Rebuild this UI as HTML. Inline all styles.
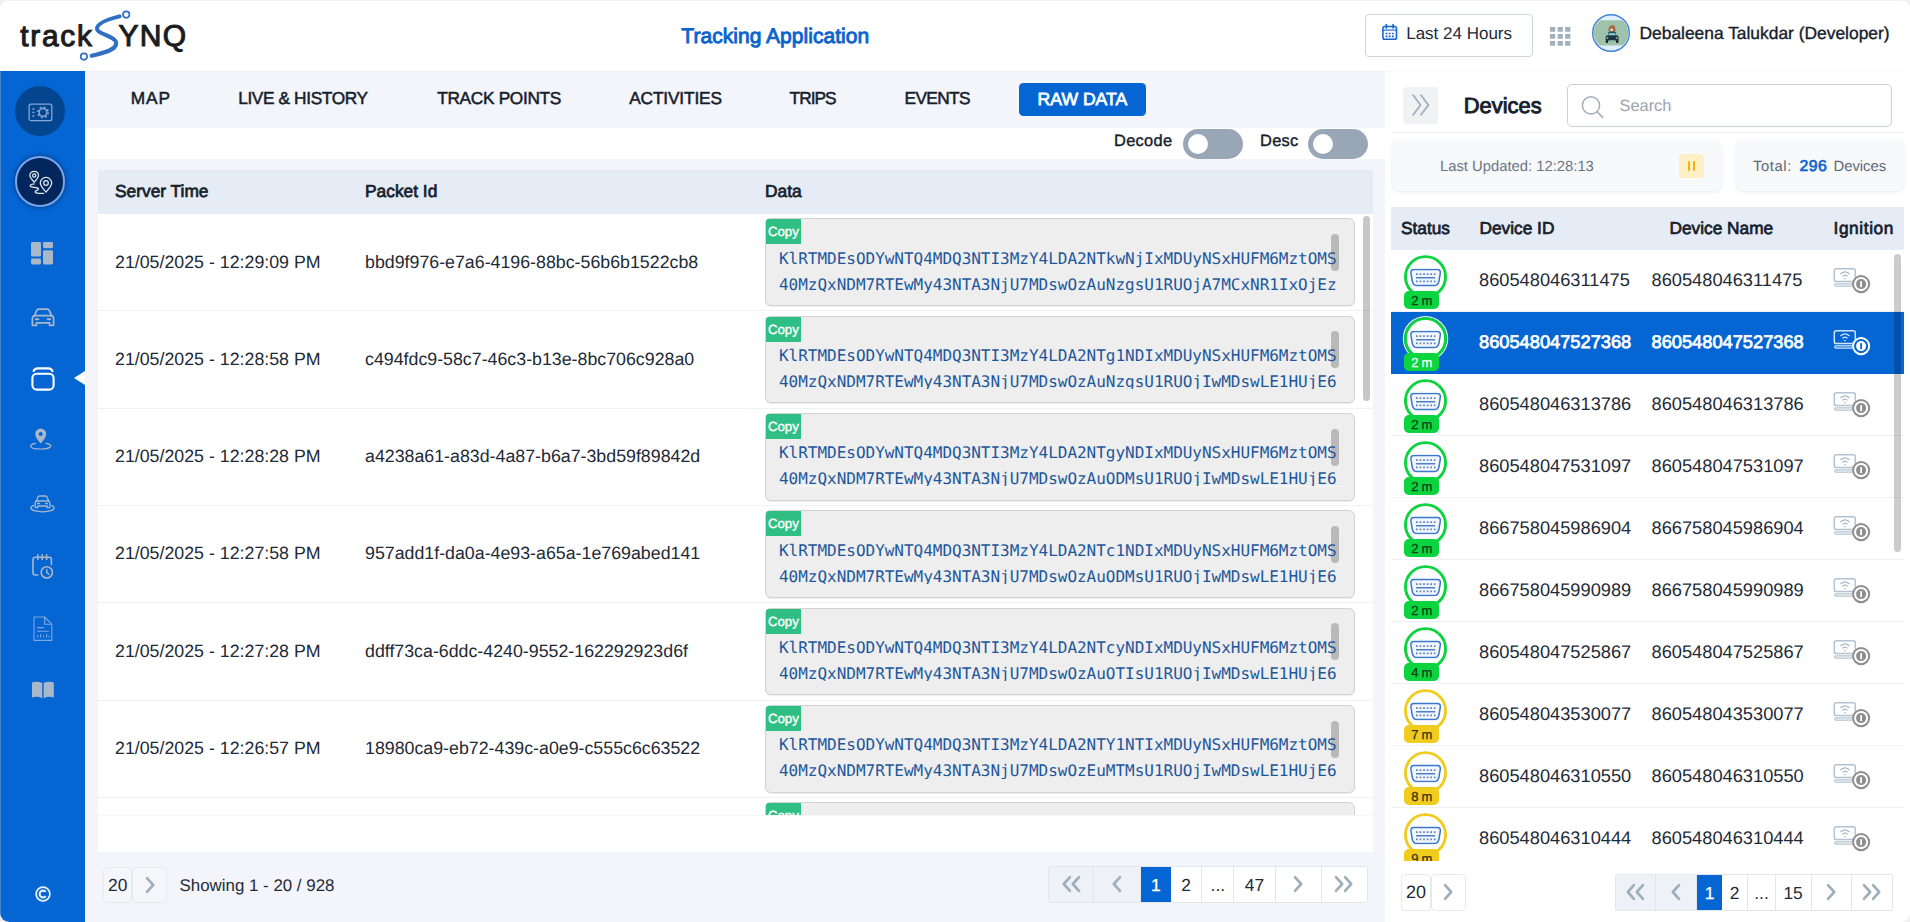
<!DOCTYPE html>
<html lang="en"><head><meta charset="utf-8"><title>Tracking Application</title>
<style>
*{box-sizing:border-box}
html,body{margin:0;padding:0}
body{width:1910px;height:922px;overflow:hidden;background:#f1f1f1;text-rendering:geometricPrecision;font-family:"Liberation Sans",sans-serif;color:#1e2a36;position:relative}
svg{display:block;overflow:visible}
#app{position:absolute;left:0;top:0;width:1910px;height:922px;background:#f3f5fa;border-radius:9.5px;overflow:hidden}
#app:after{content:"";position:absolute;left:0;top:0;width:100%;height:1px;background:#f1f1f1;z-index:50}
/* header */
#hdr{position:absolute;left:0;top:0;width:1910px;height:70.5px;background:#fff;box-shadow:0 1px 2px rgba(20,40,80,.03);z-index:5}
#logo{position:absolute;left:0;top:0}
#ttl{position:absolute;left:681.3px;top:24.8px;letter-spacing:.04px;font-size:21px;line-height:24px;font-weight:normal;-webkit-text-stroke:.9px #0b63ce;color:#0b63ce;white-space:nowrap}
#l24{position:absolute;left:1365px;top:14px;width:168px;height:42.5px;border:1px solid #cfd5de;border-radius:4px;background:#fff}
#l24 svg{position:absolute;left:16px;top:9.3px}
#l24 span{position:absolute;left:40.2px;top:8.3px;font-size:17px;line-height:22px;color:#1e2a36;white-space:nowrap}
#grid{position:absolute;left:1550.2px;top:26.5px}
#ava{position:absolute;left:1590.6px;top:13.4px}
#usr{position:absolute;left:1639.5px;top:20.5px;font-size:17.4px;line-height:24px;white-space:nowrap;color:#16202b;-webkit-text-stroke:.35px #16202b}
/* sidebar */
#side{position:absolute;left:0;top:71px;width:85px;height:851px;background:#0565d3;box-shadow:inset 1px 0 0 rgba(150,170,200,.45)}
#side svg{position:absolute}
#side .c1{position:absolute;left:15px;top:15px;width:50px;height:50px;border-radius:50%;background:#04458f}
#side .c2{position:absolute;left:14.6px;top:84.8px;width:50.8px;height:50.8px;border-radius:50%;background:#03275c;border:2px solid #7aa6ea;box-shadow:0 0 5px rgba(0,20,60,.6)}
#side .ptr{position:absolute;left:73.5px;top:299.8px;width:0;height:0;border-top:7.2px solid transparent;border-bottom:7.2px solid transparent;border-right:11.5px solid #fff}
#side .cr{position:absolute;left:32px;top:811px;font-size:20px;line-height:22px;color:#fff}
/* tabs */
#tabs{position:absolute;left:85px;top:71px;width:1300px;height:57px;background:#f3f5fa}
.tab{position:absolute;top:16.2px;font-size:17.3px;line-height:22px;white-space:nowrap;color:#16202b;-webkit-text-stroke:.5px #16202b}
.tab.on{left:934px;top:11.6px;width:126.8px;height:33.6px;border-radius:4.5px;background:#0565d3;color:#fff;font-weight:normal;-webkit-text-stroke:.75px #fff;text-align:center;line-height:33px;font-size:17.6px;letter-spacing:0}
/* toggle strip */
#strip{position:absolute;left:85px;top:128px;width:1300px;height:31px;background:#fff}
.tl{position:absolute;top:2.4px;letter-spacing:.3px;font-size:16.4px;line-height:22px;white-space:nowrap;color:#16202b;-webkit-text-stroke:.4px #16202b}
.tg{position:absolute;top:1px;width:60px;height:29.5px;border-radius:15px;background:#98a6b5}
.tg i{position:absolute;left:4.5px;top:4.5px;width:20.5px;height:20.5px;border-radius:50%;background:#fff}
/* card */
#card{position:absolute;left:98px;top:170px;width:1275px;height:681.5px;background:#fff;overflow:hidden}
.thead{position:absolute;left:0;top:0;width:1275px;height:44px;background:#e6ecf5}
.thead span{position:absolute;top:10.2px;font-size:17.35px;line-height:22px;font-weight:normal;-webkit-text-stroke:.7px #16202b;color:#16202b;white-space:nowrap}
.tbody{position:absolute;left:0;top:44px;width:1275px;height:601px;overflow:hidden}
.tr{position:relative;height:97.33px;border-bottom:1.5px solid #eef1f6}
.tr span{position:absolute;top:36.5px;font-size:17.8px;line-height:22px;color:#1e2a36;white-space:nowrap}
.tr .c1{left:17px}
.tr .c2{left:267px;font-size:17.8px;letter-spacing:0}
.pre{position:absolute;left:667px;top:4.3px;width:590px;height:87.6px;background:#eeeeee;border:1px solid #d2d2d2;border-radius:6px;box-shadow:0 1px 1px rgba(0,0,0,.07)}
.pre pre{position:absolute;z-index:2;left:13px;top:26.3px;width:566px;overflow:hidden;margin:0;font-family:"DejaVu Sans Mono","Liberation Mono",monospace;font-size:16px;line-height:26px;color:#1d579b;letter-spacing:-.02px}
.cp{position:absolute;left:0;top:0;width:34.8px;height:25px;background:#2fbf85;color:#fff;font-size:13.3px;line-height:26.2px;text-align:center;font-weight:normal;-webkit-text-stroke:.35px #fff;border-radius:2.5px 0 0 0}
.pre u{position:absolute;z-index:1;right:15.2px;top:14.6px;width:7.6px;height:37px;border-radius:3.8px;background:rgba(0,0,0,.22)}
.vsb{position:absolute;left:1265.2px;top:46.3px;width:6.9px;height:184.6px;border-radius:3.5px;background:rgba(0,0,0,.22)}
/* footer */
#foot{position:absolute;left:85px;top:851.5px;width:1300px;height:71px;background:#f3f5fa}
.pb{position:absolute;top:15px;height:36.5px;border:1px solid #e6e9ee;border-radius:4px;background:#f5f6fa;font-size:17.4px;line-height:34.4px;text-align:center;color:#1e2a36}
.show{position:absolute;left:94.5px;top:23.1px;font-size:16.9px;line-height:22px;white-space:nowrap;color:#1e2a36}
.pager{position:absolute;display:flex;border:1px solid #e3e6ec;border-radius:2px;background:#fff}
.pc{position:relative;height:100%;border-right:1px solid #e3e6ec;background:#fff;font-size:17.4px;line-height:37px;text-align:center;color:#1e2a36}
.pc:last-child{border-right:0}
.pc.dis{background:#eef1f6}
.pc.act{background:#0565d3;color:#fff;border-right:0;-webkit-text-stroke:.3px #fff}
svg.ch{position:absolute;left:50%;top:50%;width:10px;height:18px;margin:-9px 0 0 -5px}
svg.ch2{position:absolute;left:50%;top:50%;width:20px;height:18px;margin:-9px 0 0 -10px}
/* right */
#rp{position:absolute;left:1385px;top:71px;width:525px;height:851px;background:#fff}
#rp .col{position:absolute;left:18px;top:15.5px;width:35px;height:37.5px;border-radius:4px;background:#f1f2f4}
#rp .col svg{position:absolute;left:9.4px;top:7.6px}
#rp .dv{position:absolute;left:78.8px;top:19.5px;font-size:21.9px;line-height:30px;font-weight:normal;-webkit-text-stroke:.9px #16202b;color:#16202b;white-space:nowrap}
#rp .sb{position:absolute;left:182px;top:13.3px;width:325px;height:42.4px;border:1px solid #c7d0db;border-radius:5px;background:#fff}
#rp .sb svg{position:absolute;left:12.6px;top:9.6px}
#rp .sb span{position:absolute;left:51.5px;top:9.4px;font-size:16.4px;line-height:22px;color:#9aa3ae}
#rp .hr{position:absolute;left:6px;top:60.5px;width:513px;height:1.5px;background:#eef0f4}
#rp .k1,#rp .k2{position:absolute;top:69px;height:50.6px;border-radius:7px;background:#f8f9fb;box-shadow:0 1px 3px rgba(30,50,90,.10)}
#rp .k1{left:6.5px;width:330.5px}
#rp .k2{left:350.5px;width:168.5px}
#rp .k1 span{position:absolute;left:48.5px;top:16.7px;font-size:14.8px;line-height:20px;color:#6c7683;white-space:nowrap}
#rp .k1 b{position:absolute;left:287.5px;top:13.6px;width:25px;height:24.5px;border-radius:4px;background:#fdefc6}
#rp .k1 b:before,#rp .k1 b:after{content:"";position:absolute;top:7.5px;width:2.4px;height:9.5px;background:#f1b400;border-radius:1px}
#rp .k1 b:before{left:8.6px}#rp .k1 b:after{left:14px}
#rp .k2 span{position:absolute;top:16.7px;font-size:14.8px;line-height:20px;color:#5d6775;white-space:nowrap}
#rp .k2 em{position:absolute;left:63.9px;top:16.7px;font-style:normal;font-weight:normal;-webkit-text-stroke:.65px #0b63ce;font-size:15.8px;letter-spacing:.55px;line-height:20px;color:#0b63ce}
#rp .rh{position:absolute;left:6px;top:135.5px;width:513px;height:43.5px;background:#e6ecf5}
#rp .rh span{position:absolute;top:10.2px;font-size:17.3px;line-height:22px;font-weight:normal;-webkit-text-stroke:.7px #16202b;color:#16202b;white-space:nowrap}
#dl{position:absolute;left:1391px;top:250px;width:513px;height:610.5px;overflow:hidden;background:#fff}
.dr{position:relative;height:62px;border-bottom:1.5px solid #eef0f4;background:#fff}
.dr.sel{background:#0565d3;border-bottom-color:#0565d3}
.dr span{position:absolute;white-space:nowrap}
.dr svg.st{position:absolute;left:12px;top:4px;width:46px;height:46px}
.st .ring{fill:#fff;stroke:#0bd43f;stroke-width:2.9}
.st .halo{fill:none;stroke:none}
.dr.sel .st .halo{stroke:#e4f6e9;stroke-width:1.3}
.st.y .ring{stroke:#f0cc1f}
.dr .bd{left:12.9px;top:41.3px;width:35.2px;height:18.2px;border-radius:4.8px;background:#0bd43f;color:#063d12;font-size:13px;line-height:19.4px;text-align:center;word-spacing:-.6px;-webkit-text-stroke:.25px #063d12;text-indent:.8px}
.dr .bd.y{background:#f0cc1f;color:#3a3000;-webkit-text-stroke-color:#3a3000}
.dr.sel .bd{color:#fff;-webkit-text-stroke-color:#fff}
.dr .d1,.dr .d2{top:18.1px;font-size:18.25px;line-height:24px;color:#1e2a36}
.dr .d1{left:88px}.dr .d2{left:260.5px}
.dr.sel .d1,.dr.sel .d2{color:#fff;-webkit-text-stroke:.75px #fff}
.dr svg.ign{position:absolute;left:442px;top:16.5px;width:38px;height:27px}
.dr.sel svg.ign{--c1:#d2e5ff;--c2:#fff;--c3:#0565d3}
.dsb{position:absolute;left:503px;top:4px;width:7px;height:298px;border-radius:3.5px;background:rgba(0,0,0,.2)}
#rfoot{position:absolute;left:1385px;top:873.5px;width:525px;height:38px}
#rfoot .pb{top:0;height:37.5px;background:#fff;border-color:#e6e9ee;line-height:35px;font-size:18px}

.endl{position:absolute;left:0;top:645px;width:1275px;height:1px;background:#f6f7f9}
.tr:not(.r1) .pre pre{height:46.4px;overflow:hidden}
.wl{position:absolute;left:12px;top:72.2px;width:568px;height:1px;background:#f8f8f8;z-index:3}

</style></head>
<body>
<svg width="0" height="0" style="position:absolute">
<defs>
<symbol id="chr" viewBox="0 0 10 18"><path d="M2 2.2 8.2 9 2 15.8" fill="none" stroke="#9dafbb" stroke-width="2.6" stroke-linecap="round" stroke-linejoin="round"/></symbol>
<symbol id="chl" viewBox="0 0 10 18"><path d="M8 2.2 1.8 9 8 15.8" fill="none" stroke="#9dafbb" stroke-width="2.6" stroke-linecap="round" stroke-linejoin="round"/></symbol>
<symbol id="chrr" viewBox="0 0 20 18"><path d="M2 2.2 8.2 9 2 15.8M11 2.2 17.2 9 11 15.8" fill="none" stroke="#9dafbb" stroke-width="2.6" stroke-linecap="round" stroke-linejoin="round"/></symbol>
<symbol id="chll" viewBox="0 0 20 18"><path d="M9 2.2 2.8 9 9 15.8M18 2.2 11.8 9 18 15.8" fill="none" stroke="#9dafbb" stroke-width="2.6" stroke-linecap="round" stroke-linejoin="round"/></symbol>
<symbol id="obd" viewBox="0 0 31 17.8">
<path d="M4 .8H27C29.4.8 30.6 2.3 30.2 4.6L28.9 12.2C28.4 15.2 26.8 17 24 17H7C4.2 17 2.6 15.2 2.1 12.2L.8 4.6C.4 2.3 1.6.8 4 .8Z" fill="#f2f7ff" stroke="#3b78cd" stroke-width="1.55"/>
<path d="M5.9 5.55H25.4M5.9 12.8H25.4" stroke="#5f82b6" stroke-width="1.7" stroke-dasharray="1.7 1.88" fill="none"/>
<path d="M5.9 9.05H25.1" stroke="#4c7fc9" stroke-width="1.5" fill="none"/>
</symbol>
<symbol id="ign" viewBox="0 0 38 27">
<rect x="1.3" y="1.7" width="21" height="12.8" rx="2.1" fill="none" style="stroke:var(--c1,#b2c3cf)" stroke-width="1.5"/>
<rect x="1.7" y="16.8" width="19.5" height="2.3" rx="1.15" fill="none" style="stroke:var(--c1,#b2c3cf)" stroke-width="1.2"/>
<path d="M7.7 6.7C10.3 4.5 13.7 4.5 16.3 6.7M9.9 9.1C11.2 8 12.8 8 14.1 9.1" fill="none" style="stroke:var(--c1,#a9b9c6)" stroke-width="1.25" stroke-linecap="round"/>
<circle cx="12" cy="11.5" r=".85" style="fill:var(--c1,#a9b9c6)"/>
<circle cx="28.1" cy="17.1" r="9.2" style="fill:var(--c3,#fff)"/>
<circle cx="28.1" cy="17.1" r="8.1" fill="none" style="stroke:var(--c2,#8e8e8e)" stroke-width="2"/>
<circle cx="28.1" cy="17.1" r="5" style="fill:var(--c2,#8e8e8e)"/>
<rect x="27.2" y="14" width="1.8" height="6.2" rx=".6" style="fill:var(--c3,#fff)"/>
</symbol>
</defs>
</svg>
<div id="app">
<div id="hdr">
<svg id="logo" width="220" height="70" viewBox="0 0 220 70">
<text x="20.3" y="46.2" font-family="Liberation Sans, sans-serif" font-size="29.8" fill="#1c1c1e" letter-spacing="1.75" stroke="#1c1c1e" stroke-width="1.05">track</text>
<text x="118.6" y="46.2" font-family="Liberation Sans, sans-serif" font-size="30" fill="#1c1c1e" letter-spacing="1.2" stroke="#1c1c1e" stroke-width="1.05">YNQ</text>
<path d="M119.6 16.4C108 19.2 97.2 22.8 97 28.6 96.8 34 115.8 36 116.2 43 116.6 50 103 53.2 91.6 55.8" fill="none" stroke="#2f6fc4" stroke-width="4" stroke-linecap="round"/>
<circle cx="126.2" cy="14.6" r="3.2" fill="#fff" stroke="#2f6fc4" stroke-width="1.7"/>
<circle cx="83.9" cy="56.6" r="3.2" fill="#fff" stroke="#2f6fc4" stroke-width="1.7"/>
</svg>
<div id="ttl">Tracking Application</div>
<div id="l24"><svg width="15.6" height="16.6" viewBox="0 0 17 18"><rect x="1" y="2.6" width="14.8" height="14" rx="2" fill="none" stroke="#1463cf" stroke-width="1.7"/><path d="M4.7 .6V4.4M12.1 .6V4.4" stroke="#1463cf" stroke-width="1.8" stroke-linecap="round"/><path d="M1 6.6H15.8" stroke="#1463cf" stroke-width="1.2"/><path d="M4 9.4h2v1.7h-2zM7.4 9.4h2v1.7h-2zM10.8 9.4h2v1.7h-2zM4 12.6h2v1.7h-2zM7.4 12.6h2v1.7h-2zM10.8 12.6h2v1.7h-2z" fill="#1463cf"/></svg><span>Last 24 Hours</span></div>
<svg id="grid" width="21" height="19" viewBox="0 0 21 19"><path d="M0 0h5.2v4.8H0zM7.6 0h5.2v4.8H7.6zM15.2 0h5.2v4.8h-5.2zM0 7h5.2v4.8H0zM7.6 7h5.2v4.8H7.6zM15.2 7h5.2v4.8h-5.2zM0 14h5.2v4.8H0zM7.6 14h5.2v4.8H7.6zM15.2 14h5.2v4.8h-5.2z" fill="#a0b0bd"/></svg>
<svg id="ava" width="40" height="40" viewBox="0 0 40 40"><defs><clipPath id="avc"><circle cx="20" cy="20" r="17.1"/></clipPath></defs><circle cx="20" cy="20" r="18.3" fill="#e1effc" stroke="#3d80d8" stroke-width="1.4"/><rect x="2.4" y="7.3" width="35.2" height="25.2" rx="3" fill="#9fc3aa" clip-path="url(#avc)"/><path d="M17.6 18.6C17.2 15 18.6 12.4 20.6 12.6 21.6 12 23.6 12.4 24.2 14.4 24.8 16 24.6 17.6 24.4 18.6Z" fill="#a9673b"/><circle cx="20.6" cy="16.8" r="1.3" fill="#f3e9e2"/><path d="M16.6 22.8 17.6 19.2C17.8 18.6 18.2 18.4 18.8 18.4h4.600000000000001c.6 0 1 .2 1.2.8l1 3.600000000000001z" fill="#27505c"/><path d="M17.4 22.2 18.1 20.2h6l.7 2z" fill="#84d8d8"/><path d="M14.6 27.6V24.4c0-1.200000000000001.8-1.8 2-1.8h9c1.2 0 2 .6 2 1.8v3.2z" fill="#1d3542"/><rect x="15.4" y="24.2" width="2" height="1.5" rx=".7" fill="#a9bcc6"/><rect x="24.8" y="24.2" width="2" height="1.5" rx=".7" fill="#a9bcc6"/><rect x="19.2" y="27" width="3.8" height="1.6" fill="#8ea39b"/><rect x="14.8" y="27" width="2.4" height="3" rx=".9" fill="#14222b"/><rect x="25" y="27" width="2.4" height="3" rx=".9" fill="#14222b"/></svg>
<div id="usr">Debaleena Talukdar (Developer)</div>
</div>
<div id="side">
<div class="c1"></div>
<svg style="left:28px;top:31.8px" width="25" height="19" viewBox="0 0 25 19"><rect x="1.1" y="1.1" width="22.7" height="16.6" rx="2" fill="none" stroke="#86a6d4" stroke-width="1.3"/><path d="M4.4 5.2h2v1.6h-2zM4.4 8.7h2v1.6h-2zM4.4 12.2h2v1.6h-2z" fill="#86a6d4"/><circle cx="15" cy="9.4" r="3.9" fill="none" stroke="#86a6d4" stroke-width="1.6"/><circle cx="15" cy="9.4" r="5.3" fill="none" stroke="#86a6d4" stroke-width="1.5" stroke-dasharray="1.9 2.26"/></svg>
<div class="c2"></div>
<svg style="left:27px;top:97.6px" width="27" height="28" viewBox="0 0 27 28"><g fill="none" stroke="#e2e8f0" stroke-width="1.25" stroke-linecap="round" stroke-linejoin="round"><path d="M7.2 13.2C4.6 10.4 2.9 8.6 2.9 6.6A4.3 4.3 0 0 1 11.5 6.600000000000001C11.5 8.6 9.8 10.4 7.200000000000001 13.2Z"/><circle cx="7.2" cy="6.5" r="1.6"/><path d="M19 23.2C15.6 19.4 13.3 16.8 13.3 14.1A5.7 5.7 0 0 1 24.7 14.1C24.7 16.8 22.4 19.4 19 23.2Z"/><circle cx="19" cy="14" r="2.3"/><path d="M7.2 14.8C4.2 15.2 2.6 16.2 3.4 17.4 4.4 18.8 10.4 17.8 11.4 19.6 12.2 21 8.6 21.4 8.2 22.6 7.8 23.8 11 24.6 16.6 24.4"/></g></svg>
<!-- dashboard -->
<svg style="left:31.2px;top:171.4px" width="22" height="23" viewBox="0 0 22 23"><g fill="#a9b8c8"><rect x="0" y="0" width="10" height="14.6" rx="1.4"/><rect x="12" y="0" width="10" height="6.2" rx="1.4"/><rect x="0" y="16.6" width="10" height="5.8" rx="1.4"/><rect x="12" y="8.2" width="10" height="14.2" rx="1.4"/></g></svg>
<!-- car -->
<svg style="left:30.5px;top:237px" width="24" height="19" viewBox="0 0 24 19"><g fill="none" stroke="#a9b8c8" stroke-width="1.7" stroke-linejoin="round" stroke-linecap="round"><path d="M3.4 7.6 5.6 2.6C6 1.6 6.8 1.2 7.8 1.2h8.400000000000001c1 0 1.8.4 2.2 1.4l2.2 5"/><path d="M1.4 17.4v-7c0-1.8 1-2.8 2.8-2.8h15.600000000000001c1.8 0 2.8 1 2.8 2.8v7h-4v-2.600000000000001h-13.2v2.600000000000001z"/><path d="M4.8 11.2h2.6M16.6 11.2h2.6" stroke-width="1.9"/></g></svg>
<!-- wallet active -->
<svg style="left:30.5px;top:296px" width="24" height="24" viewBox="0 0 24 24"><g fill="none" stroke="#fff" stroke-width="2.1" stroke-linecap="round"><path d="M2.6 4.2C3.2 2.4 4.6 1.4 6.6 1.4h10.8c2 0 3.400000000000001 1 4 2.8"/><rect x="1.4" y="6.8" width="21.2" height="15.8" rx="4.4"/></g></svg>
<div class="ptr"></div>
<!-- pin -->
<svg style="left:29.5px;top:357px" width="22" height="22" viewBox="0 0 22 22"><path d="M10.7 15.6C7.2 11.6 5.2 8.8 5.2 6.1A5.5 5.5 0 0 1 16.2 6.1C16.2 8.8 14.2 11.6 10.7 15.600000000000001Z" fill="#a9b8c8"/><circle cx="10.7" cy="6" r="2" fill="#0565d3"/><path d="M5.4 15.4C2.4 16 .6 16.9.6 17.9.6 19.7 5 21 10.7 21s10.1-1.3 10.1-3.1c0-1-1.8-1.9-4.8-2.5" fill="none" stroke="#a9b8c8" stroke-width="1.2" stroke-linecap="round"/></svg>
<!-- car on ellipse -->
<svg style="left:30px;top:424px" width="25" height="18" viewBox="0 0 25 18"><g fill="none" stroke="#a9b8c8" stroke-width="1.3" stroke-linecap="round" stroke-linejoin="round"><path d="M6.4 6 7.8 2.2C8.1 1.4 8.7 1 9.5 1h6c.8 0 1.4.4 1.7 1.2L18.6 6"/><path d="M5.2 12.6V7.8c0-1.200000000000001.7-1.8 1.8-1.8h11c1.100000000000001 0 1.8.6 1.8 1.8v4.8h-2.6v-1.6H7.8v1.6z"/><path d="M7.6 8.4h1.8M15.6 8.4h1.8" stroke-width="1.5"/><path d="M3.6 10.4C1.800000000000001 11.2.8 12 .8 13c0 2.100000000000001 5.2 3.8 11.7 3.8S24.2 15.100000000000001 24.2 13c0-1-1-1.8-2.8-2.6"/></g></svg>
<!-- calendar clock -->
<svg style="left:32px;top:482.5px" width="22" height="25" viewBox="0 0 22 25"><g fill="none" stroke="#a9b8c8" stroke-width="1.6" stroke-linecap="round" stroke-linejoin="round"><path d="M5.800000000000001 21H3.2C1.800000000000001 21 1 20.2 1 18.8V5.4c0-1.4.8-2.2 2.2-2.2h14c1.4 0 2.2.8 2.2 2.2v5"/><path d="M5.800000000000001 .9V5.4M10.2 .9V5.4M14.6 .9V5.4"/><circle cx="14.8" cy="18.4" r="5.6"/><path d="M14.8 15.4v3.2l2 1.6" stroke-width="1.4"/></g></svg>
<!-- doc -->
<svg style="left:33px;top:544.5px" width="20" height="26" viewBox="0 0 20 26"><g fill="none" stroke="#7da7e2" stroke-width="1.1" stroke-linejoin="round"><path d="M1 1h10.6l7.2 7.2V24.4H1z"/><path d="M11.6 1v7.2h7.2"/><path d="M4 11.600000000000001h7M4 15.2h12M4.600000000000001 21.400000000000002v-2.400000000000001M7.6 21.400000000000002v-3.400000000000001M10.6 21.400000000000002v-2M13.6 21.400000000000002v-3.400000000000001M16 21.400000000000002v-1.6"/></g></svg>
<!-- book -->
<svg style="left:31.5px;top:610px" width="22" height="18" viewBox="0 0 22 18"><path d="M0 1.4C3.6.2 7 .4 10.2 2v15.2C7 15.6 3.6 15.4 0 16.6zM21.8 1.4C18.2.2 14.8.4 11.6 2v15.2c3.2-1.6 6.600000000000001-1.8 10.2-.6z" fill="#a9b8c8"/></svg>
<svg style="left:33.7px;top:813.9px" width="18" height="18" viewBox="0 0 18 18"><circle cx="9" cy="9" r="6.9" fill="none" stroke="#e8f2ff" stroke-width="1.7"/><path d="M11.7 6.9A3.4 3.4 0 1 0 11.7 11.1" fill="none" stroke="#e8f2ff" stroke-width="2.1"/></svg>
</div>
<div id="tabs"><span class="tab" style="left:45.8px;letter-spacing:.85px">MAP</span><span class="tab" style="left:153.2px;letter-spacing:-.38px">LIVE &amp; HISTORY</span><span class="tab" style="left:352.2px;letter-spacing:-.32px">TRACK POINTS</span><span class="tab" style="left:544.2px;letter-spacing:-.15px">ACTIVITIES</span><span class="tab" style="left:704.6px;letter-spacing:-.98px">TRIPS</span><span class="tab" style="left:819.6px;letter-spacing:-.66px">EVENTS</span><span class="tab on">RAW DATA</span></div>
<div id="strip"><span class="tl" style="left:1029px">Decode</span><span class="tg" style="left:1098px"><i></i></span><span class="tl" style="left:1175px">Desc</span><span class="tg" style="left:1223px"><i></i></span></div>
<div id="card">
<div class="thead"><span style="left:17px">Server Time</span><span style="left:267px">Packet Id</span><span style="left:667px">Data</span></div>
<div class="tbody">
<div class="tr r1"><span class="c1">21/05/2025 - 12:29:09 PM</span><span class="c2">bbd9f976-e7a6-4196-88bc-56b6b1522cb8</span><div class="pre"><b class="cp">Copy</b><pre>KlRTMDEsODYwNTQ4MDQ3NTI3MzY4LDA2NTkwNjIxMDUyNSxHUFM6MztOMS
40MzQxNDM7RTEwMy43NTA3NjU7MDswOzAuNzgsU1RUOjA7MCxNR1IxOjEz</pre><u></u></div></div>
<div class="tr"><span class="c1">21/05/2025 - 12:28:58 PM</span><span class="c2">c494fdc9-58c7-46c3-b13e-8bc706c928a0</span><div class="pre"><b class="cp">Copy</b><pre>KlRTMDEsODYwNTQ4MDQ3NTI3MzY4LDA2NTg1NDIxMDUyNSxHUFM6MztOMS
40MzQxNDM7RTEwMy43NTA3NjU7MDswOzAuNzgsU1RUOjIwMDswLE1HUjE6</pre><u></u></div></div>
<div class="tr"><span class="c1">21/05/2025 - 12:28:28 PM</span><span class="c2">a4238a61-a83d-4a87-b6a7-3bd59f89842d</span><div class="pre"><b class="cp">Copy</b><pre>KlRTMDEsODYwNTQ4MDQ3NTI3MzY4LDA2NTgyNDIxMDUyNSxHUFM6MztOMS
40MzQxNDM7RTEwMy43NTA3NjU7MDswOzAuODMsU1RUOjIwMDswLE1HUjE6</pre><u></u><i class="wl"></i></div></div>
<div class="tr"><span class="c1">21/05/2025 - 12:27:58 PM</span><span class="c2">957add1f-da0a-4e93-a65a-1e769abed141</span><div class="pre"><b class="cp">Copy</b><pre>KlRTMDEsODYwNTQ4MDQ3NTI3MzY4LDA2NTc1NDIxMDUyNSxHUFM6MztOMS
40MzQxNDM7RTEwMy43NTA3NjU7MDswOzAuODMsU1RUOjIwMDswLE1HUjE6</pre><u></u></div></div>
<div class="tr"><span class="c1">21/05/2025 - 12:27:28 PM</span><span class="c2">ddff73ca-6ddc-4240-9552-162292923d6f</span><div class="pre"><b class="cp">Copy</b><pre>KlRTMDEsODYwNTQ4MDQ3NTI3MzY4LDA2NTcyNDIxMDUyNSxHUFM6MztOMS
40MzQxNDM7RTEwMy43NTA3NjU7MDswOzAuOTIsU1RUOjIwMDswLE1HUjE6</pre><u></u></div></div>
<div class="tr"><span class="c1">21/05/2025 - 12:26:57 PM</span><span class="c2">18980ca9-eb72-439c-a0e9-c555c6c63522</span><div class="pre"><b class="cp">Copy</b><pre>KlRTMDEsODYwNTQ4MDQ3NTI3MzY4LDA2NTY1NTIxMDUyNSxHUFM6MztOMS
40MzQxNDM7RTEwMy43NTA3NjU7MDswOzEuMTMsU1RUOjIwMDswLE1HUjE6</pre><u></u></div></div>
<div class="tr"><span class="c1">21/05/2025 - 12:26:27 PM</span><span class="c2">5f0c2a3e-7b1d-4c8e-9a4f-2d6e8b7c1a90</span><div class="pre"><b class="cp">Copy</b><pre>KlRTMDEsODYwNTQ4MDQ3NTI3MzY4LDA2NTYyNTIxMDUyNSxHUFM6MztOMS
40MzQxNDM7RTEwMy43NTA3NjU7MDswOzEuMTMsU1RUOjIwMDswLE1HUjE6</pre><u></u></div></div>
</div>
<div class="endl"></div><div class="vsb"></div>
</div>
<div id="foot"><span class="pb" style="left:18px;width:29.4px">20</span><span class="pb" style="left:47.4px;width:34.4px"><svg class="ch"><use href="#chr"/></svg></span><span class="show">Showing 1 - 20 / 928</span>
<div class="pager" style="left:963.4px;top:14.1px;height:37.6px"><span class="pc dis" style="width:45px"><svg class="ch2"><use href="#chll"/></svg></span><span class="pc dis" style="width:46.4px"><svg class="ch"><use href="#chl"/></svg></span><span class="pc act" style="width:30.2px">1</span><span class="pc" style="width:31.4px">2</span><span class="pc" style="width:32px">...</span><span class="pc" style="width:41.2px">47</span><span class="pc" style="width:46px"><svg class="ch"><use href="#chr"/></svg></span><span class="pc" style="width:45px"><svg class="ch2"><use href="#chrr"/></svg></span></div></div>
<div id="rp">
<div class="col"><svg width="18" height="22" viewBox="0 0 18 22"><path d="M1.2 1.2 8.6 11 1.2 20.8M9 1.2 16.4 11 9 20.8" fill="none" stroke="#9fb1c0" stroke-width="1.9" stroke-linecap="round" stroke-linejoin="round"/></svg></div>
<div class="dv">Devices</div>
<div class="sb"><svg width="24" height="24" viewBox="0 0 24 24"><circle cx="10" cy="10.400000000000001" r="8.6" fill="none" stroke="#a3adba" stroke-width="1.5"/><path d="M16.2 16.8 21.6 22.4" stroke="#a3adba" stroke-width="1.6" stroke-linecap="round"/></svg><span>Search</span></div>
<div class="hr"></div>
<div class="k1"><span>Last Updated: 12:28:13</span><b></b></div>
<div class="k2"><span style="left:17.5px;letter-spacing:.6px">Total:</span><em>296</em><span style="left:98px">Devices</span></div>
<div class="rh"><span style="left:10px">Status</span><span style="left:88.5px">Device ID</span><span style="left:278.5px">Device Name</span><span style="left:442.5px;letter-spacing:.6px">Ignition</span></div>
</div>
<div id="dl">
<div class="dr"><svg class="st g" viewBox="0 0 46 46"><circle class="halo" cx="22.5" cy="22.7" r="22.1"/><circle class="ring" cx="22.5" cy="22.7" r="20.05"/><use href="#obd" x="7.1" y="14.6" width="31" height="17.8"/></svg><span class="bd g">2 m</span><span class="d1">860548046311475</span><span class="d2">860548046311475</span><svg class="ign"><use href="#ign"/></svg></div>
<div class="dr sel"><svg class="st g" viewBox="0 0 46 46"><circle class="halo" cx="22.5" cy="22.7" r="22.1"/><circle class="ring" cx="22.5" cy="22.7" r="20.05"/><use href="#obd" x="7.1" y="14.6" width="31" height="17.8"/></svg><span class="bd g">2 m</span><span class="d1">860548047527368</span><span class="d2">860548047527368</span><svg class="ign"><use href="#ign"/></svg></div>
<div class="dr"><svg class="st g" viewBox="0 0 46 46"><circle class="halo" cx="22.5" cy="22.7" r="22.1"/><circle class="ring" cx="22.5" cy="22.7" r="20.05"/><use href="#obd" x="7.1" y="14.6" width="31" height="17.8"/></svg><span class="bd g">2 m</span><span class="d1">860548046313786</span><span class="d2">860548046313786</span><svg class="ign"><use href="#ign"/></svg></div>
<div class="dr"><svg class="st g" viewBox="0 0 46 46"><circle class="halo" cx="22.5" cy="22.7" r="22.1"/><circle class="ring" cx="22.5" cy="22.7" r="20.05"/><use href="#obd" x="7.1" y="14.6" width="31" height="17.8"/></svg><span class="bd g">2 m</span><span class="d1">860548047531097</span><span class="d2">860548047531097</span><svg class="ign"><use href="#ign"/></svg></div>
<div class="dr"><svg class="st g" viewBox="0 0 46 46"><circle class="halo" cx="22.5" cy="22.7" r="22.1"/><circle class="ring" cx="22.5" cy="22.7" r="20.05"/><use href="#obd" x="7.1" y="14.6" width="31" height="17.8"/></svg><span class="bd g">2 m</span><span class="d1">866758045986904</span><span class="d2">866758045986904</span><svg class="ign"><use href="#ign"/></svg></div>
<div class="dr"><svg class="st g" viewBox="0 0 46 46"><circle class="halo" cx="22.5" cy="22.7" r="22.1"/><circle class="ring" cx="22.5" cy="22.7" r="20.05"/><use href="#obd" x="7.1" y="14.6" width="31" height="17.8"/></svg><span class="bd g">2 m</span><span class="d1">866758045990989</span><span class="d2">866758045990989</span><svg class="ign"><use href="#ign"/></svg></div>
<div class="dr"><svg class="st g" viewBox="0 0 46 46"><circle class="halo" cx="22.5" cy="22.7" r="22.1"/><circle class="ring" cx="22.5" cy="22.7" r="20.05"/><use href="#obd" x="7.1" y="14.6" width="31" height="17.8"/></svg><span class="bd g">4 m</span><span class="d1">860548047525867</span><span class="d2">860548047525867</span><svg class="ign"><use href="#ign"/></svg></div>
<div class="dr"><svg class="st y" viewBox="0 0 46 46"><circle class="halo" cx="22.5" cy="22.7" r="22.1"/><circle class="ring" cx="22.5" cy="22.7" r="20.05"/><use href="#obd" x="7.1" y="14.6" width="31" height="17.8"/></svg><span class="bd y">7 m</span><span class="d1">860548043530077</span><span class="d2">860548043530077</span><svg class="ign"><use href="#ign"/></svg></div>
<div class="dr"><svg class="st y" viewBox="0 0 46 46"><circle class="halo" cx="22.5" cy="22.7" r="22.1"/><circle class="ring" cx="22.5" cy="22.7" r="20.05"/><use href="#obd" x="7.1" y="14.6" width="31" height="17.8"/></svg><span class="bd y">8 m</span><span class="d1">860548046310550</span><span class="d2">860548046310550</span><svg class="ign"><use href="#ign"/></svg></div>
<div class="dr"><svg class="st y" viewBox="0 0 46 46"><circle class="halo" cx="22.5" cy="22.7" r="22.1"/><circle class="ring" cx="22.5" cy="22.7" r="20.05"/><use href="#obd" x="7.1" y="14.6" width="31" height="17.8"/></svg><span class="bd y">9 m</span><span class="d1">860548046310444</span><span class="d2">860548046310444</span><svg class="ign"><use href="#ign"/></svg></div>
<div class="dsb"></div></div>
<div id="rfoot"><span class="pb" style="left:16px;width:29.8px">20</span><span class="pb" style="left:46.2px;width:34.6px"><svg class="ch"><use href="#chr"/></svg></span><div class="pager" style="left:230.3px;top:0;height:37.2px"><span class="pc dis" style="width:39.4px"><svg class="ch2"><use href="#chll"/></svg></span><span class="pc dis" style="width:41.3px"><svg class="ch"><use href="#chl"/></svg></span><span class="pc act" style="width:25px">1</span><span class="pc" style="width:26.4px">2</span><span class="pc" style="width:27.2px">...</span><span class="pc" style="width:36px">15</span><span class="pc" style="width:40.7px"><svg class="ch"><use href="#chr"/></svg></span><span class="pc" style="width:40.2px"><svg class="ch2"><use href="#chrr"/></svg></span></div></div>
</div>
</body></html>
